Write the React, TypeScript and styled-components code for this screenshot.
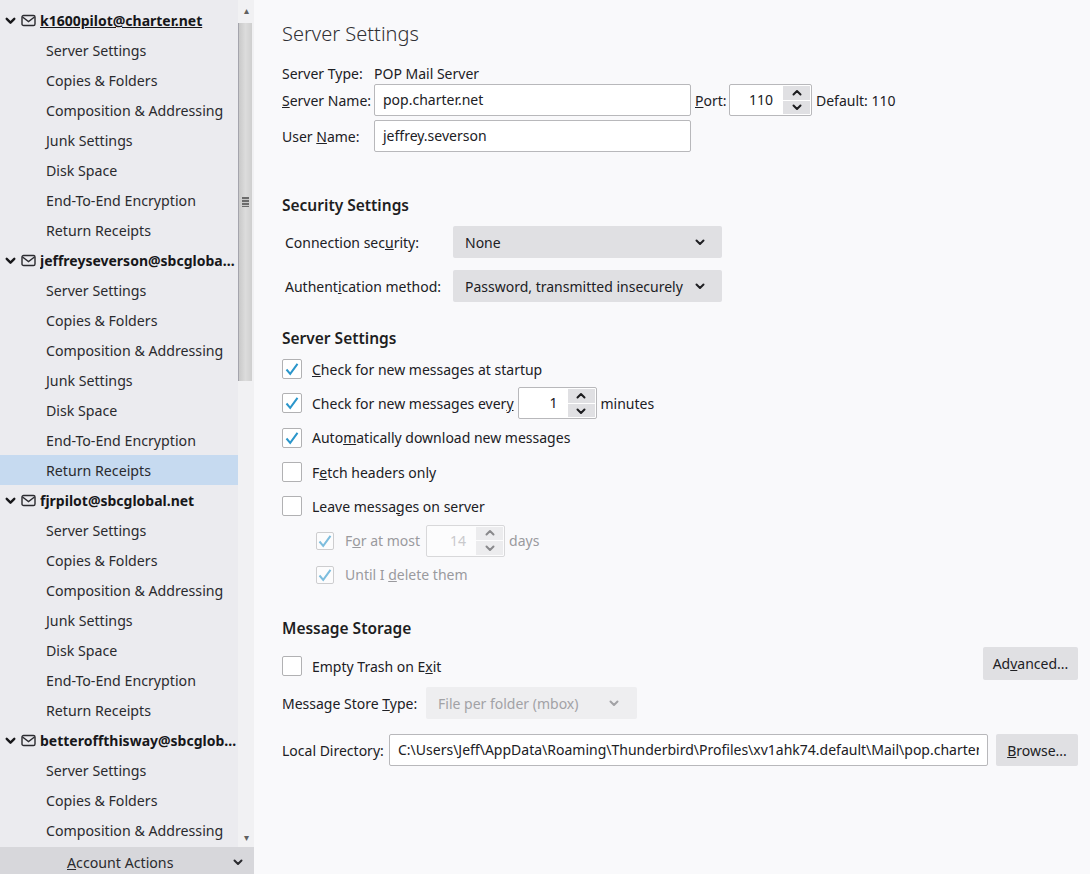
import { ReactNode } from "react";
import styled, { createGlobalStyle } from "styled-components";

const GlobalStyle = createGlobalStyle`
  html, body {
    margin: 0;
    padding: 0;
    height: 100%;
  }
  body {
    font-family: "Noto Sans", "Open Sans", sans-serif;
    font-size: 14px;
    color: #202024;
    overflow: hidden;
  }
`;

const accounts = [
  { name: "k1600pilot@charter.net", underlined: true },
  { name: "jeffreyseverson@sbcglobal.net" },
  { name: "fjrpilot@sbcglobal.net" },
  { name: "betteroffthisway@sbcglobal.net" },
];

const pages = [
  "Server Settings",
  "Copies & Folders",
  "Composition & Addressing",
  "Junk Settings",
  "Disk Space",
  "End-To-End Encryption",
  "Return Receipts",
];

const Chevron = ({ up, size = 12, width = 2 }: { up?: boolean; size?: number; width?: number }) => (
  <svg width={size} height={size} viewBox="0 0 12 12" fill="none">
    <path
      d={up ? "M2.5 7.5 L6 4 L9.5 7.5" : "M2.5 4.5 L6 8 L9.5 4.5"}
      stroke="currentColor"
      strokeWidth={width}
      strokeLinecap="round"
      strokeLinejoin="round"
    />
  </svg>
);

const Envelope = () => (
  <svg width="15" height="13" viewBox="0 0 15 13" fill="none">
    <rect x="1" y="1.5" width="13" height="10" rx="1.6" stroke="#2b2b30" strokeWidth="1.4" />
    <path d="M1.5 3 L7.5 7.5 L13.5 3" stroke="#2b2b30" strokeWidth="1.4" />
  </svg>
);

const Tick = () => (
  <svg width="14" height="14" viewBox="0 0 14 14" fill="none">
    <path d="M1.5 7.5 L5.2 11.8 L12.5 1.8" stroke="#2b96cb" strokeWidth="2" />
  </svg>
);

const Check = ({ checked, small, disabled }: { checked?: boolean; small?: boolean; disabled?: boolean }) => (
  <CheckBox $small={small} $disabled={disabled}>
    {checked && <Tick />}
  </CheckBox>
);

const Spinner = ({ value, disabled, width = 79 }: { value: string; disabled?: boolean; width?: number }) => (
  <SpinBox $disabled={disabled} $width={width}>
    <SpinValue>{value}</SpinValue>
    <SpinButtons>
      <SpinButton>
        <Chevron up />
      </SpinButton>
      <SpinButton>
        <Chevron />
      </SpinButton>
    </SpinButtons>
  </SpinBox>
);

const Option = ({
  checked,
  children,
}: {
  checked?: boolean;
  children: ReactNode;
}) => (
  <OptionRow>
    <Check checked={checked} />
    <OptionText>{children}</OptionText>
  </OptionRow>
);

export default function App() {
  return (
    <Page>
      <GlobalStyle />
      <Sidebar>
        <TreeArea>
          <Tree>
            {accounts.map((account) => (
              <div key={account.name}>
                <AccountRow>
                  <Chevron size={13} width={2.2} />
                  <Envelope />
                  <AccountName $underlined={account.underlined}>{account.name}</AccountName>
                </AccountRow>
                {pages.map((page) => (
                  <PageRow
                    key={page}
                    $selected={account.name.startsWith("jeffrey") && page === "Return Receipts"}
                  >
                    {page}
                  </PageRow>
                ))}
              </div>
            ))}
          </Tree>
          <ScrollBar>
            <ScrollArrow>▴</ScrollArrow>
            <ScrollThumb>
              <Grip />
            </ScrollThumb>
            <ScrollTrack />
            <ScrollArrow>▾</ScrollArrow>
          </ScrollBar>
        </TreeArea>
        <ActionsBar>
          <ActionsLabel>
            <Key>A</Key>ccount Actions
          </ActionsLabel>
          <Chevron />
        </ActionsBar>
      </Sidebar>

      <Main>
        <Title>Server Settings</Title>

        <FieldRow $top={14} $height={20}>
          <FieldLabel $width={92}>Server Type:</FieldLabel>
          POP Mail Server
        </FieldRow>
        <FieldRow $top={1} $height={32}>
          <FieldLabel $width={92}>
            <Key>S</Key>erver Name:
          </FieldLabel>
          <TextField $width={317}>pop.charter.net</TextField>
          <PortLabel>
            <Key>P</Key>ort:
          </PortLabel>
          <Spinner value="110" width={83} />
          <DefaultNote>Default: 110</DefaultNote>
        </FieldRow>
        <FieldRow $top={4} $height={32}>
          <FieldLabel $width={92}>
            User <Key>N</Key>ame:
          </FieldLabel>
          <TextField $width={317}>jeffrey.severson</TextField>
        </FieldRow>

        <SectionTitle $top={41}>Security Settings</SectionTitle>
        <SelectRow $top={9}>
          <SelectLabel>
            Connection sec<Key>u</Key>rity:
          </SelectLabel>
          <SelectBox $width={269}>
            None
            <Chevron />
          </SelectBox>
        </SelectRow>
        <SelectRow $top={12}>
          <SelectLabel>
            Authent<Key>i</Key>cation method:
          </SelectLabel>
          <SelectBox $width={269}>
            Password, transmitted insecurely
            <Chevron />
          </SelectBox>
        </SelectRow>

        <SectionTitle $top={24}>Server Settings</SectionTitle>
        <OptionList>
          <Option checked>
            <span>
              <Key>C</Key>heck for new messages at startup
            </span>
          </Option>
          <Option checked>
            <span>
              Check for new messages ever<Key>y</Key>
            </span>
            <Spinner value="1" />
            <span>minutes</span>
          </Option>
          <Option checked>
            <span>
              Auto<Key>m</Key>atically download new messages
            </span>
          </Option>
          <Option>
            <span>
              F<Key>e</Key>tch headers only
            </span>
          </Option>
          <Option>
            <span>
              Leave messa<Key>g</Key>es on server
            </span>
          </Option>
          <SubOption>
            <Check checked small disabled />
            <OptionText>
              <SubLabel>
                F<Key>o</Key>r at most
              </SubLabel>
              <Spinner value="14" disabled />
              <span>days</span>
            </OptionText>
          </SubOption>
          <SubOption>
            <Check checked small disabled />
            <span>
              Until I <Key>d</Key>elete them
            </span>
          </SubOption>
        </OptionList>

        <SectionTitle $top={24}>Message Storage</SectionTitle>
        <StorageRow>
          <StorageOption>
            <Option>
              <span>
                Empty Trash on E<Key>x</Key>it
              </span>
            </Option>
          </StorageOption>
          <PushButton $width={95} $height={33}>
            Ad<Key>v</Key>anced...
          </PushButton>
        </StorageRow>
        <FieldRow $top={7} $height={32}>
          <StoreLabel>
            Message Store <Key>T</Key>ype:
          </StoreLabel>
          <DisabledSelect>
            File per folder (mbox)
            <Chevron />
          </DisabledSelect>
        </FieldRow>
        <FieldRow $top={15} $height={32}>
          <DirectoryLabel>Local Directory:</DirectoryLabel>
          <DirectoryField>
            <DirectoryText>
              C:\Users\Jeff\AppData\Roaming\Thunderbird\Profiles\xv1ahk74.default\Mail\pop.charter.net
            </DirectoryText>
          </DirectoryField>
          <PushButton $width={82} $height={32}>
            <Key>B</Key>rowse...
          </PushButton>
        </FieldRow>
      </Main>
    </Page>
  );
}

const Page = styled.div`
  height: 100vh;
  width: 100vw;
  display: flex;
  background-color: #f9f9fb;
`;

const Sidebar = styled.div`
  width: 254px;
  flex: none;
  display: flex;
  flex-direction: column;
  font-size: 14.2px;
  background-color: #ebebef;
`;

const TreeArea = styled.div`
  flex: 1;
  min-height: 0;
  display: flex;
`;

const Tree = styled.div`
  flex: 1;
  min-width: 0;
  height: 842px;
  padding-top: 5px;
  box-sizing: border-box;
  overflow: hidden;
`;

const AccountRow = styled.div`
  height: 30px;
  display: flex;
  align-items: center;
  gap: 4px;
  padding-left: 4px;
  color: #17171a;
`;

const AccountName = styled.span<{ $underlined?: boolean }>`
  flex: 1;
  min-width: 0;
  font-size: 14px;
  font-weight: 700;
  white-space: nowrap;
  overflow: hidden;
  text-overflow: ellipsis;
  text-decoration: ${(p) => (p.$underlined ? "underline" : "none")};
`;

const PageRow = styled.div<{ $selected?: boolean }>`
  height: 30px;
  line-height: 31px;
  padding-left: 46px;
  white-space: nowrap;
  color: #2a2a2e;
  background-color: ${(p) => (p.$selected ? "#c6daf0" : "transparent")};
`;

const ScrollBar = styled.div`
  width: 16px;
  flex: none;
  height: 847px;
  display: flex;
  flex-direction: column;
  align-items: center;
  background-color: #f1f1f3;
`;

const ScrollArrow = styled.div`
  height: 17px;
  width: 100%;
  margin-top: 3px;
  text-align: center;
  font-size: 10px;
  line-height: 15px;
  color: #606060;
`;

const ScrollThumb = styled.div`
  height: 358px;
  width: 100%;
  margin-top: 3px;
  box-sizing: border-box;
  display: flex;
  align-items: center;
  justify-content: center;
  border-left: 1px solid #a4a4ac;
  border-right: 2px solid #f1f1f3;
  background: linear-gradient(to right, #c9c9c9, #dcdcdc 50%, #cfcfcf);
`;

const Grip = styled.div`
  width: 7px;
  height: 10px;
  background: repeating-linear-gradient(to bottom, #6c6c6c 0 2px, #c8c8c8 2px 3px);
`;

const ScrollTrack = styled.div`
  flex: 1;
`;

const ActionsBar = styled.div`
  height: 27px;
  flex: none;
  display: flex;
  align-items: center;
  padding: 3px 10px 0 67px;
  box-sizing: border-box;
  background-color: #d7d7db;
  color: #2a2a2e;
`;

const ActionsLabel = styled.span`
  flex: 1;
`;

const Key = styled.span`
  text-decoration: underline;
`;

const Main = styled.div`
  flex: 1;
  min-width: 0;
  padding: 19px 12px 0 28px;
`;

const Title = styled.div`
  height: 30px;
  line-height: 30px;
  font-size: 20px;
  font-weight: 300;
  color: #303034;
`;

const FieldRow = styled.div<{ $top: number; $height: number }>`
  display: flex;
  align-items: center;
  height: ${(p) => p.$height}px;
  margin-top: ${(p) => p.$top}px;
  white-space: nowrap;
`;

const FieldLabel = styled.span<{ $width: number }>`
  width: ${(p) => p.$width}px;
  flex: none;
`;

const TextField = styled.div<{ $width: number }>`
  width: ${(p) => p.$width}px;
  height: 32px;
  line-height: 30px;
  box-sizing: border-box;
  padding-left: 8px;
  flex: none;
  background-color: #fff;
  border: 1px solid #b8b8bb;
  border-radius: 2px;
`;

const PortLabel = styled.span`
  width: 38px;
  flex: none;
  padding-left: 4px;
  box-sizing: border-box;
`;

const DefaultNote = styled.span`
  margin-left: 4px;
`;

const SpinBox = styled.div<{ $disabled?: boolean; $width: number }>`
  width: ${(p) => p.$width}px;
  height: 32px;
  flex: none;
  display: flex;
  box-sizing: border-box;
  background-color: #fff;
  border: 1px solid #b8b8bb;
  border-radius: 2px;
  opacity: ${(p) => (p.$disabled ? 0.5 : 1)};
`;

const SpinValue = styled.span`
  flex: 1;
  line-height: 30px;
  text-align: right;
  padding-right: 9px;
`;

const SpinButtons = styled.div`
  width: 27px;
  margin: 1px;
  display: flex;
  flex-direction: column;
  gap: 1px;
`;

const SpinButton = styled.div`
  flex: 1;
  display: flex;
  align-items: center;
  justify-content: center;
  background-color: #e0e0e3;
  color: #1c1c1f;
`;

const SectionTitle = styled.div<{ $top: number }>`
  margin-top: ${(p) => p.$top}px;
  height: 24px;
  line-height: 24px;
  font-size: 15.5px;
  font-weight: 600;
  color: #1e1e22;
`;

const SelectRow = styled.div<{ $top: number }>`
  display: flex;
  align-items: center;
  margin-top: ${(p) => p.$top}px;
  padding-left: 3px;
`;

const SelectLabel = styled.span`
  width: 168px;
  flex: none;
`;

const SelectBox = styled.div<{ $width: number }>`
  width: ${(p) => p.$width}px;
  height: 32px;
  box-sizing: border-box;
  display: flex;
  align-items: center;
  justify-content: space-between;
  padding: 0 16px 0 12px;
  background-color: #e0e0e3;
  border-radius: 2px;
  white-space: nowrap;
`;

const OptionList = styled.div`
  display: flex;
  flex-direction: column;
  margin-top: 2px;
`;

const OptionRow = styled.div`
  display: flex;
  align-items: center;
  gap: 10px;
  height: 34.3px;
  white-space: nowrap;
`;

const OptionText = styled.div`
  display: flex;
  align-items: center;
  gap: 4px;
`;

const SubLabel = styled.span`
  margin-right: 2px;
`;

const SubOption = styled(OptionRow)`
  padding-left: 34px;
  gap: 11px;
  color: #9a9a9e;
`;

const CheckBox = styled.div<{ $small?: boolean; $disabled?: boolean }>`
  width: ${(p) => (p.$small ? 18 : 20)}px;
  height: ${(p) => (p.$small ? 18 : 20)}px;
  box-sizing: border-box;
  flex: none;
  display: flex;
  align-items: center;
  justify-content: center;
  background-color: #fff;
  border: 1px solid #b1b1b3;
  border-radius: 2px;
  opacity: ${(p) => (p.$disabled ? 0.6 : 1)};
`;

const StorageRow = styled.div`
  display: flex;
  align-items: flex-start;
  justify-content: space-between;
  height: 33px;
  margin-top: 7px;
`;

const StorageOption = styled.div`
  margin-top: 2px;
`;

const PushButton = styled.div<{ $width: number; $height: number }>`
  width: ${(p) => p.$width}px;
  height: ${(p) => p.$height}px;
  flex: none;
  display: flex;
  align-items: center;
  justify-content: center;
  background-color: #e0e0e3;
  border-radius: 2px;
`;

const StoreLabel = styled.span`
  width: 144px;
  flex: none;
`;

const DisabledSelect = styled.div`
  width: 211px;
  height: 32px;
  box-sizing: border-box;
  display: flex;
  align-items: center;
  justify-content: space-between;
  padding: 0 17px 0 12px;
  background-color: #eeeef0;
  color: #a2a2a6;
  border-radius: 2px;
`;

const DirectoryLabel = styled.span`
  width: 107px;
  flex: none;
`;

const DirectoryField = styled.div`
  width: 599px;
  height: 32px;
  margin-right: 8px;
  flex: none;
  box-sizing: border-box;
  padding: 0 8px;
  background-color: #fff;
  border: 1px solid #b8b8bb;
  border-radius: 2px;
`;

const DirectoryText = styled.div`
  line-height: 30px;
  overflow: hidden;
  white-space: nowrap;
`;
